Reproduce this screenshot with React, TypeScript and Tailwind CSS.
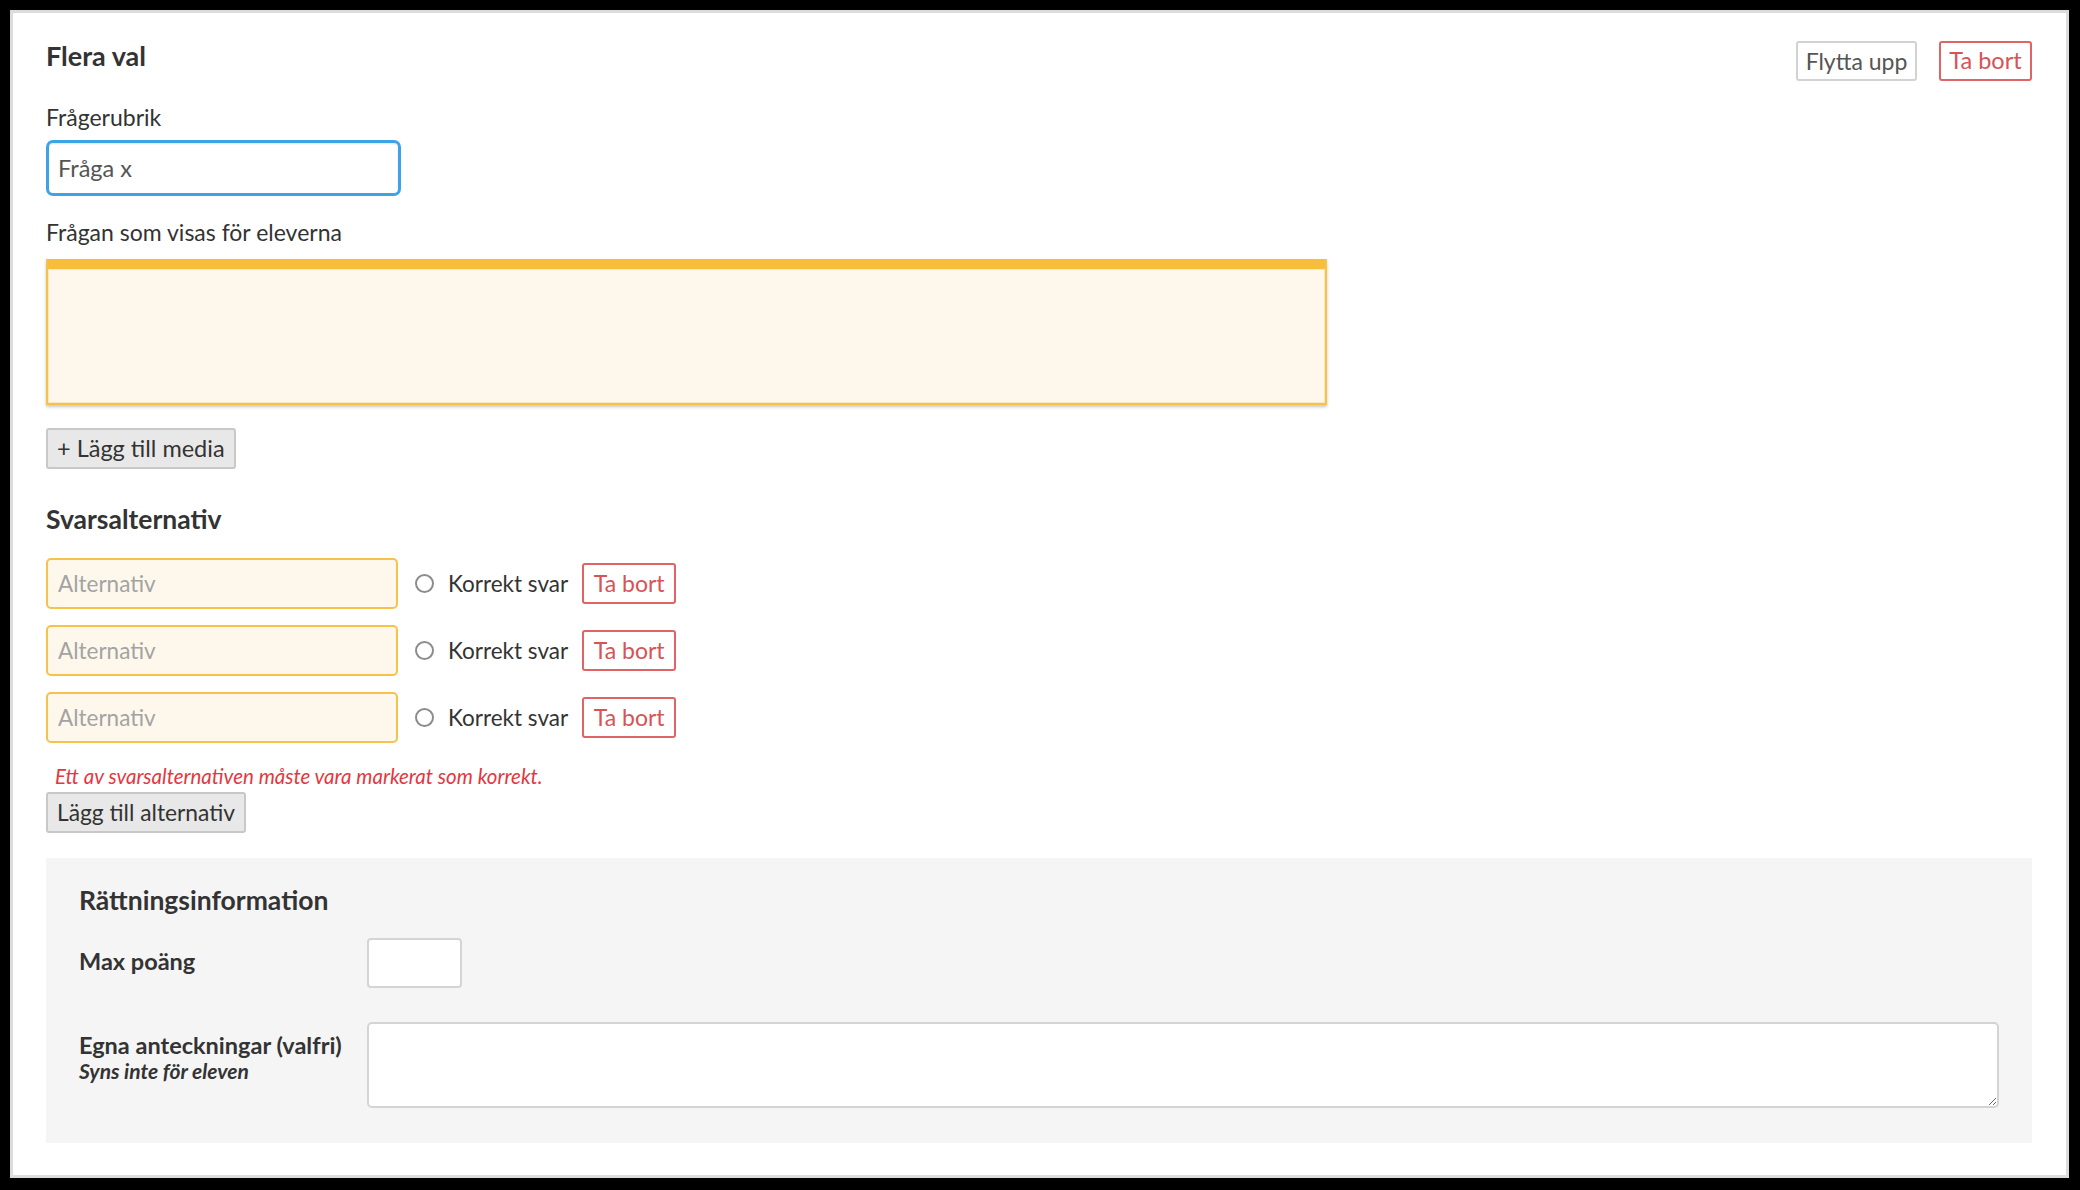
import React from "react";

const font = { fontFamily: "Lato, 'Open Sans', sans-serif" };

function GrayButton({ children, size }: { children: React.ReactNode; size: "sm" | "md" }) {
  return (
    <button
      type="button"
      className={
        "h-[41px] rounded-[3px] border-2 border-[#c8c8c8] bg-[#e8e8e8] px-[9px] leading-none text-[#333] " +
        (size === "md" ? "text-[23.5px]" : "text-[22.8px]")
      }
    >
      {children}
    </button>
  );
}

function RemoveButton() {
  return (
    <button
      type="button"
      className="h-[41px] w-[94px] rounded-[3px] border-2 border-[#e06466] bg-white text-[23px] leading-none text-[#d65356]"
    >
      Ta bort
    </button>
  );
}

function AlternativeRow() {
  return (
    <div className="flex items-center">
      <input
        placeholder="Alternativ"
        className="h-[51px] w-[352px] rounded-[5px] border-2 border-[#f6c24c] bg-[#fef8ec] px-[10px] text-[22.5px] text-[#555] outline-none placeholder:text-[#a3a3a3]"
      />
      <span className="ml-[17px] h-[19px] w-[19px] rounded-full border-2 border-[#8c8c8c] bg-white" />
      <span className="ml-[14px] text-[22.5px] text-[#333]">Korrekt svar</span>
      <div className="ml-[14px]">
        <RemoveButton />
      </div>
    </div>
  );
}

export default function App() {
  return (
    <div style={font} className="h-[1190px] bg-black pb-[12px] pl-[10px] pr-[11px] pt-[10px]">
      <div className="h-full border-[3px] border-[#dcdcdc] bg-white pl-[33px] pr-[34px] pt-[28px]">
        {/* header */}
        <div className="flex items-start justify-between">
          <h2 className="text-[27px] font-bold leading-[30px] text-[#333]">Flera val</h2>
          <div className="flex gap-[22px]">
            <button
              type="button"
              className="h-[40px] w-[121px] rounded-[3px] border-2 border-[#d2d2d2] bg-white text-[23px] leading-none text-[#555]"
            >
              Flytta upp
            </button>
            <button
              type="button"
              className="h-[40px] w-[93px] rounded-[3px] border-2 border-[#e06466] bg-white text-[23.5px] leading-none text-[#d65356]"
            >
              Ta bort
            </button>
          </div>
        </div>

        <label className="mt-[22px] block text-[23px] leading-[28px] text-[#333]">Frågerubrik</label>
        <input
          defaultValue="Fråga x"
          className="mt-[9px] h-[56px] w-[355px] rounded-[7px] border-[3px] border-[#3ea3e4] bg-white px-[9px] text-[23.5px] text-[#555] shadow-[inset_0_1px_2px_rgba(0,0,0,0.12)] outline-none"
        />

        <label className="mt-[22px] block text-[23px] leading-[28px] text-[#333]">
          Frågan som visas för eleverna
        </label>
        <div className="mt-[13px] h-[146px] w-[1281px] border-2 border-t-0 border-[#f6c24c] bg-[#fef7ec] shadow-[0_2px_3px_rgba(0,0,0,0.22)]">
          <div className="h-[10px] bg-[#f7be3c]" />
          <div className="h-[134px] border border-[#fde7bd]" />
        </div>

        <div className="mt-[23px]">
          <GrayButton size="md">+ Lägg till media</GrayButton>
        </div>

        <h3 className="mt-[35px] text-[26.5px] font-bold leading-[30px] text-[#333]">Svarsalternativ</h3>
        <div className="mt-[24px] flex flex-col gap-[16px]">
          <AlternativeRow />
          <AlternativeRow />
          <AlternativeRow />
        </div>

        <p className="ml-[9px] mt-[21px] text-[20.5px] italic leading-[24px] text-[#e2383f]">
          Ett av svarsalternativen måste vara markerat som korrekt.
        </p>
        <div className="mt-[4px]">
          <GrayButton size="sm">Lägg till alternativ</GrayButton>
        </div>

        {/* grading info */}
        <div className="mt-[25px] h-[285px] bg-[#f5f5f5] px-[33px] pt-[27px]">
          <h3 className="text-[26.5px] font-bold leading-[30px] text-[#333]">Rättningsinformation</h3>
          <div className="mt-[23px] flex items-center">
            <span className="-mt-[3px] w-[288px] text-[23.5px] font-bold text-[#333]">Max poäng</span>
            <input className="h-[50px] w-[95px] rounded-[4px] border-2 border-[#d4d4d4] bg-white outline-none" />
          </div>
          <div className="mt-[34px] flex items-start">
            <div className="w-[288px] pt-[9px]">
              <div className="text-[23.5px] font-bold leading-[28px] text-[#333]">Egna anteckningar (valfri)</div>
              <div className="text-[21px] font-bold italic leading-[24px] text-[#333]">Syns inte för eleven</div>
            </div>
            <textarea className="h-[86px] flex-1 rounded-[5px] border-2 border-[#d4d4d4] bg-white outline-none" />
          </div>
        </div>
      </div>
    </div>
  );
}
